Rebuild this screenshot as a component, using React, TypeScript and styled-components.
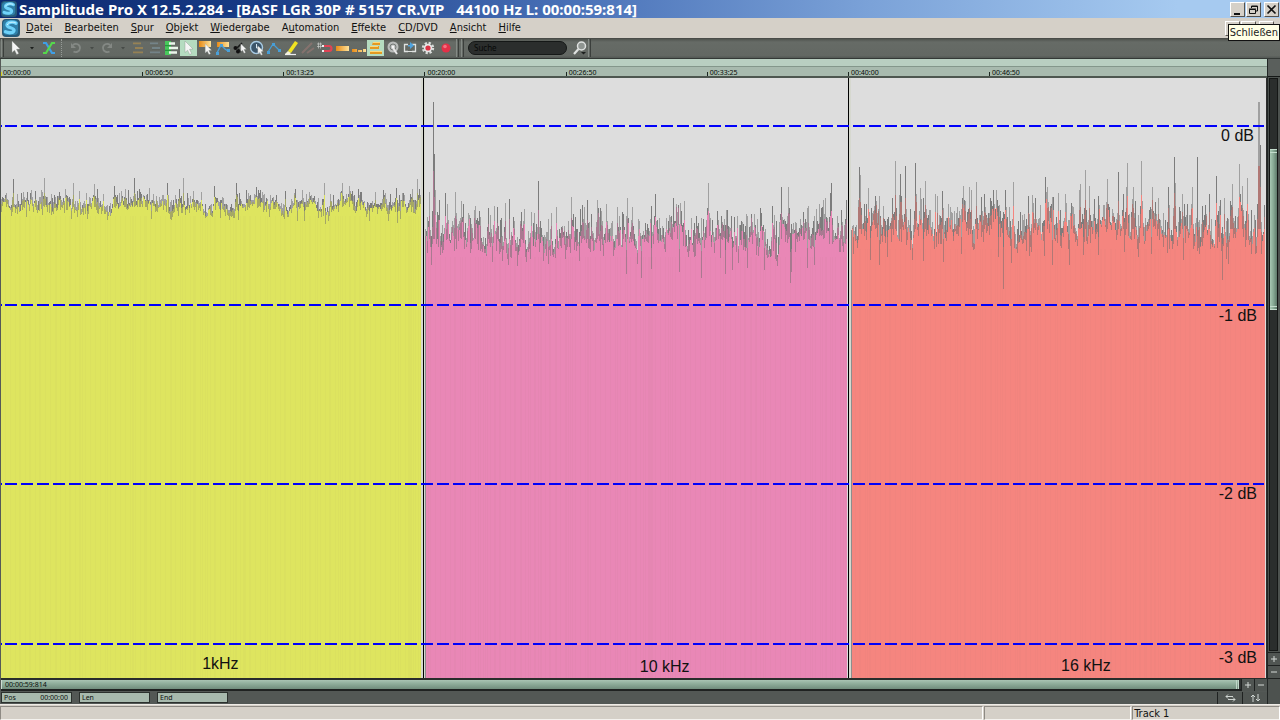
import React from "react";
import styled, { createGlobalStyle, css } from "styled-components";

const GlobalStyle = createGlobalStyle`
  *, *::before, *::after { box-sizing: border-box; }
  body { margin: 0; background: #d5d0c8; font-family: "Noto Sans", "Open Sans", sans-serif; }
  button, input { font: inherit; color: inherit; margin: 0; padding: 0; border: 0; border-radius: 0; background: none; }
`;

const uiFont = `"DejaVu Sans Condensed", "DejaVu Sans", sans-serif`;

/* ---------- window frame ---------- */

const Window = styled.div`
  position: relative;
  display: flex;
  flex-direction: column;
  width: 100%;
  min-height: 100vh;
  overflow: hidden;
`;

const TitleBar = styled.header`
  display: flex;
  align-items: center;
  height: 18px;
  padding: 0 1px 0 1px;
  background: linear-gradient(90deg, #0d2a70 0%, #173a85 20%, #4a72b8 45%, #7ba2d8 68%, #a6caf0 92%);
`;

const Title = styled.h1`
  flex: 1;
  margin: 0 0 0 2px;
  font-size: 15px;
  line-height: 18px;
  font-weight: 700;
  color: #fff;
  white-space: pre;
`;

const MenuBar = styled.nav`
  display: flex;
  align-items: center;
  height: 20px;
  padding: 0 6px 0 2px;
  background: #d5d0c8;
`;

const MenuList = styled.div`
  display: flex;
  flex: 1;
  gap: 12px;
  padding-left: 6px;
`;

const MenuItem = styled.button`
  font-family: ${uiFont};
  font-size: 11px;
  line-height: 18px;
  color: #111;
  white-space: nowrap;
`;

const WindowButtons = styled.div`
  display: flex;
  gap: 1px;
`;

const WindowButton = styled.button<{ $apart?: boolean }>`
  display: flex;
  width: 15px;
  height: 15px;
  margin-left: ${(p) => (p.$apart ? 2 : 0)}px;
  background: #d5d0c8;
  border: 1px solid;
  border-color: #fff #55524e #55524e #fff;
`;

const Tooltip = styled.div`
  position: absolute;
  top: 24px;
  right: 0;
  padding: 0 1px;
  border: 1px solid #111;
  background: #ffffe6;
  font-family: ${uiFont};
  font-size: 11px;
  line-height: 15px;
  color: #222;
`;

/* ---------- toolbar ---------- */

const ToolBar = styled.div`
  display: flex;
  align-items: center;
  height: 21px;
  padding: 0 0 2px 1px;
  background: linear-gradient(#50544f, #666b66 3px, #636863 17px, #565b57 18px);
  border-top: 1px solid #4a4c48;
  border-bottom: 1px solid #343936;
`;

const ToolButton = styled.button<{ $active?: boolean; $dim?: boolean; $w?: number }>`
  display: flex;
  align-items: center;
  justify-content: center;
  flex: none;
  width: ${(p) => p.$w ?? 17}px;
  height: 16px;
  opacity: ${(p) => (p.$dim ? 0.4 : 1)};
  ${(p) => p.$active && css`background: #b5dcc0;`}
`;

const Grip = styled.span<{ $dotted?: boolean; $apart?: boolean }>`
  flex: none;
  width: 3px;
  height: 18px;
  margin-right: 2px;
  margin-left: ${(p) => (p.$apart ? 4 : 0)}px;
  border-left: 1px ${(p) => (p.$dotted ? "dotted #969b97" : "solid #848a85")};
  border-right: 1px ${(p) => (p.$dotted ? "none" : "solid #3b3f3c")};
`;

const SearchBox = styled.input`
  flex: none;
  width: 99px;
  height: 14px;
  margin: 0 4px 0 2px;
  padding: 0 5px;
  border: 1px solid #151817;
  border-radius: 7px;
  background: #2b2e2d;
  font-size: 8px;
  color: #090b0a;
  &::placeholder { color: #070908; opacity: 1; }
`;

/* ---------- project area ---------- */

const Project = styled.main`
  display: flex;
  flex: 1;
`;

const Arrange = styled.section`
  display: flex;
  flex-direction: column;
  flex: 1;
  min-width: 0;
  border-left: 1px solid #555a57;
`;

const RulerTop = styled.div`
  height: 8px;
  background: #b9cfc1;
  border-bottom: 1px solid #84978b;
`;

const Ruler = styled.div`
  display: flex;
  height: 11px;
  background: #a8baae;
  border-bottom: 2px solid #4d564f;
  overflow: hidden;
`;

const RulerMark = styled.span`
  position: relative;
  flex: 0 0 11.15%;
  padding-left: 3px;
  font-size: 7px;
  line-height: 11px;
  color: #060a08;
  white-space: nowrap;
  &::before {
    content: "";
    position: absolute;
    left: 0;
    bottom: 0;
    width: 1px;
    height: 4px;
    background: #1d2721;
  }
  &:first-child { padding-left: 2px; }
  &:first-child::before { background: #d6d21c; }
`;

const Canvas = styled.div`
  position: relative;
  flex: 1;
  min-height: 300px;
  background: #ddd;
  border-right: 1px solid #2c2c2c;
`;

const Drawing = styled.svg`
  position: absolute;
  inset: 0;
  width: 100%;
  height: 100%;
`;

const LevelLabel = styled.span<{ $top: number; $right: number }>`
  position: absolute;
  top: ${(p) => p.$top}%;
  right: ${(p) => p.$right}px;
  font: 16px/20px "Liberation Sans", Arial, sans-serif;
  color: #111;
`;

const TrackLabel = styled.span<{ $left: number; $bottom: number }>`
  position: absolute;
  left: ${(p) => p.$left}%;
  bottom: ${(p) => p.$bottom}px;
  font: 16px/20px "Liberation Sans", Arial, sans-serif;
  color: #111;
`;

const HScroll = styled.div`
  display: flex;
  align-items: center;
  height: 13px;
  background: #303433;
  border-top: 2px solid #2a2d2b;
  border-bottom: 2px solid #1f2221;
`;

const HThumb = styled.div`
  flex: 1;
  height: 9px;
  margin-right: 2px;
  padding-left: 3px;
  border-left: 1px solid #ccdcd2;
  border-right: 3px double #c0d6c8;
  background: linear-gradient(#a9c4b3, #8fae9b 40%, #718d7d);
  font-size: 7px;
  line-height: 9px;
  color: #0a100d;
`;

const SmallButton = styled.button<{ $w?: number }>`
  display: flex;
  flex: none;
  align-items: center;
  justify-content: center;
  width: ${(p) => p.$w ?? 13}px;
  height: 12px;
  background: #505552;
  border-left: 1px solid #1f2221;
`;

const Transport = styled.div`
  display: flex;
  align-items: center;
  height: 13px;
  gap: 7px;
  background: #535855;
`;

const Field = styled.label`
  display: flex;
  align-items: center;
  width: 71px;
  height: 11px;
  padding: 0 3px 0 2px;
  border: 1px solid #2b302d;
  background: #a7b9ad;
  font-size: 7px;
  line-height: 9px;
  color: #0c120f;
`;

const FieldInput = styled.input`
  flex: 1;
  width: 0;
  height: 9px;
  text-align: right;
`;

const TransportEnd = styled.div`
  display: flex;
  margin-left: auto;
`;

const SideBar = styled.aside`
  display: flex;
  flex-direction: column;
  flex: none;
  width: 13px;
  background: #4d524f;
  border-left: 1px solid #222625;
`;

const SideTop = styled.div`
  height: 18px;
  border-bottom: 1px solid #151817;
  background: #5a5f5c;
`;

const SideTrack = styled.div`
  display: flex;
  flex: 1;
  flex-direction: column;
  margin: 1px 2px 1px 1px;
  border: 1px solid #151716;
  background: #2b2e2d;
`;

const Space = styled.div<{ $grow: number }>`
  flex: ${(p) => p.$grow} 0 0;
`;

const SideThumb = styled.div`
  flex: 155 0 0;
  border-top: 4px double #c3dccc;
  border-bottom: 4px double #c3dccc;
  background: linear-gradient(90deg, #a7c8b3, #86a893 50%, #5f7a6b);
`;

const SideButton = styled(SmallButton)`
  width: 12px;
  height: 13px;
  border-left: 0;
  border-top: 1px solid #1f2221;
`;

const SideBottom = styled.div`
  height: 26px;
  border-top: 1px solid #1f2221;
`;

const StatusBar = styled.footer`
  display: flex;
  height: 16px;
  gap: 1px;
  padding-top: 1px;
  background: #d5d0c8;
  border-top: 1px solid #eeebe6;
`;

const StatusCell = styled.div<{ $grow: number }>`
  flex: ${(p) => p.$grow} 0 0;
  padding-left: 1px;
  border: 1px solid;
  border-color: #8e8a84 #fff #f4f2ee #8e8a84;
  font-family: ${uiFont};
  font-size: 11px;
  line-height: 13px;
  color: #111;
`;

/* ---------- waveform data ---------- */

type Mark = [x: number, y: number];

interface Track {
  from: number;
  to: number;
  mean: number;
  spread: number;
  color: string;
  peaks: Mark[];
  dips: Mark[];
}

const tracks: Track[] = [
  {
    from: 1, to: 421, mean: 207, spread: 9, color: "#dee55f",
    peaks: [[6, 193], [13, 179], [23, 192], [35, 191], [44, 178], [59, 192], [65, 189], [73, 183], [79, 191], [86, 193], [94, 184], [103, 194], [114, 186], [125, 189], [134, 178], [139, 189], [146, 195], [167, 183], [179, 189], [183, 178], [193, 191], [201, 192], [214, 186], [236, 183], [248, 193], [256, 187], [258, 190], [276, 195], [285, 191], [295, 189], [308, 199], [324, 183], [330, 194], [342, 183], [349, 186], [358, 189], [375, 192], [383, 190], [396, 188], [402, 193], [412, 189], [417, 179], [419, 189]],
    dips: [[26, 217], [42, 215], [77, 217], [87, 219], [107, 220], [151, 219], [171, 220], [238, 220], [284, 219], [297, 221], [304, 221], [318, 218], [369, 221], [388, 221], [397, 223], [400, 219]],
  },
  {
    from: 425, to: 847, mean: 239, spread: 18, color: "#e987b6",
    peaks: [[429, 192], [433, 102], [434, 154], [435, 190], [439, 200], [445, 193], [447, 204], [455, 192], [461, 201], [468, 213], [475, 206], [479, 211], [488, 208], [497, 207], [505, 203], [509, 199], [513, 217], [521, 212], [524, 209], [531, 212], [538, 181], [551, 213], [556, 207], [568, 221], [571, 197], [573, 214], [582, 205], [587, 200], [591, 214], [597, 200], [601, 211], [606, 204], [617, 207], [623, 214], [627, 198], [632, 207], [645, 223], [651, 206], [655, 194], [666, 218], [677, 212], [684, 201], [691, 218], [696, 216], [708, 183], [721, 216], [726, 210], [731, 216], [737, 216], [742, 222], [754, 214], [761, 213], [772, 206], [774, 215], [781, 187], [788, 187], [796, 223], [804, 223], [808, 206], [825, 198], [830, 193], [831, 183], [837, 216], [841, 210], [846, 200]],
    dips: [[431, 265], [443, 250], [470, 253], [492, 262], [502, 261], [517, 266], [543, 261], [548, 264], [579, 261], [603, 256], [626, 274], [641, 278], [651, 269], [679, 272], [701, 278], [725, 274], [732, 270], [747, 268], [764, 270], [790, 283], [791, 272], [807, 268], [814, 265]],
  },
  {
    from: 852, to: 1265, mean: 229, spread: 20, color: "#f5857f",
    peaks: [[859, 167], [860, 175], [868, 188], [875, 196], [883, 206], [892, 198], [895, 161], [900, 174], [905, 166], [915, 163], [925, 181], [935, 194], [937, 196], [942, 191], [948, 204], [963, 186], [969, 187], [971, 190], [976, 182], [984, 194], [991, 201], [1005, 190], [1013, 182], [1028, 196], [1032, 195], [1045, 177], [1047, 187], [1052, 197], [1058, 193], [1065, 194], [1071, 203], [1079, 190], [1080, 184], [1085, 170], [1089, 186], [1098, 196], [1107, 179], [1118, 172], [1123, 194], [1126, 187], [1127, 163], [1133, 187], [1141, 161], [1155, 202], [1158, 198], [1168, 187], [1174, 157], [1175, 183], [1182, 194], [1192, 187], [1197, 157], [1209, 194], [1216, 176], [1220, 200], [1224, 198], [1232, 184], [1239, 164], [1242, 186], [1247, 178], [1258, 102], [1259, 102], [1260, 145], [1264, 205]],
    dips: [[853, 254], [870, 260], [879, 265], [887, 257], [923, 261], [943, 262], [961, 254], [998, 257], [1003, 289], [1011, 263], [1052, 265], [1069, 265], [1083, 255], [1098, 255], [1138, 257], [1151, 254], [1183, 260], [1197, 251], [1222, 280], [1228, 264], [1255, 254]],
  },
];

const FLOOR = 678;

function makeRandom(seed: number) {
  let s = seed;
  return () => {
    s = (s * 1664525 + 1013904223) >>> 0;
    return s / 4294967296;
  };
}

interface Shape {
  fill: string;
  light: string;
  dark: string;
  shade: string;
  stripes: string;
}

function shapeOf(track: Track, seed: number): Shape {
  const rnd = makeRandom(seed);
  const peaks = new Map(track.peaks);
  const dips = new Map(track.dips);
  const { mean, spread, from, to } = track;
  let fill = `M${from} ${FLOOR}`;
  let light = "";
  let dark = "";
  let shade = "";
  let stripes = "";
  let drift = 0;
  for (let x = from; x < to; x++) {
    drift = drift * 0.75 + (rnd() - 0.5) * spread * 0.85;
    const near = peaks.get(x - 1) ?? peaks.get(x + 1);
    const bottom = mean + spread * 0.15 + drift;
    let edge = bottom - rnd() * rnd() * spread * 0.8;
    let top = edge - rnd() * rnd() * spread * 1.6 - 2;
    let low = bottom + rnd() * rnd() * spread * 0.9;
    if (near !== undefined) {
      edge -= Math.min(spread * 0.6, (mean - near) * 0.25);
      top = Math.min(top, edge - (mean - near) * 0.12);
    }
    const peak = peaks.get(x);
    if (peak !== undefined) {
      top = peak;
      edge = mean - (mean - peak) * 0.5;
      low = Math.max(edge, mean);
    }
    const dip = dips.get(x);
    if (dip !== undefined) {
      low = dip;
      edge = mean + (dip - mean) * 0.3;
      top = Math.min(top, mean - 2);
    }
    const y = Math.round(edge);
    fill += `V${y}H${x + 1}`;
    const above = `M${x} ${Math.round(top)}h1V${y}h-1z`;
    if (rnd() < 0.45) dark += above;
    else light += above;
    if (low > y && (rnd() < 0.7 || dip !== undefined)) shade += `M${x} ${y}h1V${Math.round(low)}h-1z`;
    if (x % 5 === 0 || rnd() < 0.12) stripes += `M${x} ${Math.round(mean + spread)}h1V${FLOOR}h-1z`;
  }
  fill += `V${FLOOR}Z`;
  return { fill, light, dark, shade, stripes };
}

const shapes = tracks.map((t, i) => shapeOf(t, 71 + i * 37));
const levels = [126, 305, 484, 644];

function Waveforms() {
  return (
    <Drawing viewBox="1 78 1265 600" preserveAspectRatio="none" shapeRendering="crispEdges" role="img" aria-label="Pegelverlauf 1 kHz, 10 kHz, 16 kHz">
      {tracks.map((t, i) => (
        <g key={t.color}>
          <path d={shapes[i].fill} fill={t.color} />
          <path d={shapes[i].light} fill="#a0a0a0" />
          <path d={shapes[i].dark} fill="#7c7c7c" />
          <path d={shapes[i].shade} fill="#6c6c6c" fillOpacity={0.5} />
          <path d={shapes[i].stripes} fill="#a08060" fillOpacity={0.04} />
        </g>
      ))}
      <path d="M421 78h2v600h-2zM424 78h1v600h-1zM849 78h2v600h-2z" fill="#d6d8cf" />
      <path d="M423 78h1v600h-1zM848 78h1v600h-1z" fill="#000" />
      <path d="M425 236h1v442h-1zM851 230h1v448h-1z" fill="#8d8d8d" />
      {levels.map((y) => (
        <path key={y} d={`M5 ${y}H1264`} stroke="#0000fa" strokeWidth={2} strokeDasharray="12 4" />
      ))}
      {levels.map((y) => (
        <path key={y} d={`M1 ${y}h1`} stroke="#0000fa" strokeWidth={2} />
      ))}
    </Drawing>
  );
}

/* ---------- icons ---------- */

const Icon = ({ children }: { children: React.ReactNode }) => (
  <svg width="16" height="16" viewBox="0 0 16 16" fill="none" aria-hidden="true">{children}</svg>
);

const Pointer = ({ x = 0, y = 0, s = 1 }: { x?: number; y?: number; s?: number }) => (
  <path transform={`translate(${x} ${y}) scale(${s})`} d="M4 1l8 8-3.500.3 2.200 4.200-2 1-2.100-4.300L4 12.500z" fill="#f4f5f4" stroke="#8a8f8b" strokeWidth=".4" />
);

const AppLogo = ({ size }: { size: number }) => (
  <svg width={size} height={size} viewBox="0 0 18 18" aria-hidden="true">
    <rect x="0" y="0" width="18" height="18" rx="4" fill="#285a78" />
    <rect x="1" y="1" width="15" height="15" rx="4" fill="#2f7fa8" />
    <path d="M14 4.200C11 2.400 5.500 3 5 6c-.4 3 7.500 2.500 7 5.500-.4 2.500-5 2.800-8.500 1.300" fill="none" stroke="#6fd2fa" strokeWidth="3.400" strokeLinecap="round" />
    <path d="M13.500 3.800C11 2.600 6 3 5.400 5.600" fill="none" stroke="#d5f5ff" strokeWidth="1" strokeLinecap="round" />
  </svg>
);

const MinimizeGlyph = () => (
  <svg width="13" height="13" viewBox="0 0 13 13" aria-hidden="true"><path d="M3 10h6v2H3z" fill="#111" /></svg>
);
const RestoreGlyph = () => (
  <svg width="13" height="13" viewBox="0 0 13 13" aria-hidden="true">
    <path d="M4.500 5V3h6v5H9M4 3.500h7M2.500 6.500h6v4h-6zM2 6h7" fill="none" stroke="#111" />
  </svg>
);
const CloseGlyph = () => (
  <svg width="13" height="13" viewBox="0 0 13 13" aria-hidden="true"><path d="M2.500 2.500l8 8M10.500 2.500l-8 8" stroke="#111" strokeWidth="1.600" /></svg>
);

const Caret = () => (
  <svg width="6" height="6" viewBox="0 0 6 6" aria-hidden="true"><path d="M1 2h4L3 4.500z" fill="#1c1f1d" /></svg>
);

const Curl = ({ flip }: { flip?: boolean }) => (
  <Icon>
    <g transform={flip ? "translate(16 0) scale(-1 1)" : undefined}>
      <path d="M5 5c3-2.500 7-.5 7 3s-4 5-6.500 3.500" stroke="#b3b7b4" strokeWidth="1.800" />
      <path d="M3 3v5h5z" fill="#b3b7b4" />
    </g>
  </Icon>
);

const Bars = ({ a, b }: { a: string; b: string }) => (
  <Icon>
    <path d="M3 3.500h8M5 8h8M3 12.500h10" stroke={a} strokeWidth="2" />
    <path d="M3 5h8M5 9.500h8M3 14h10" stroke={b} strokeWidth="1" />
  </Icon>
);

const Gold = () => (
  <defs>
    <linearGradient id="gold" x1="0" x2="1" y1="0" y2="0">
      <stop offset="0" stopColor="#e78a16" />
      <stop offset="1" stopColor="#ffe39a" />
    </linearGradient>
  </defs>
);

const tools: { name: string; icon: React.ReactNode; active?: boolean; dim?: boolean }[] = [
  { name: "Gruppieren", icon: <Bars a="#e0a53e" b="#67706a" />, dim: true },
  { name: "Gruppe lösen", icon: <Bars a="#8cabbd" b="#565d58" />, dim: true },
  {
    name: "Spuren", icon: (
      <Icon>
        <path d="M1 1h6v14H1z" fill="#48c85c" />
        <path d="M5 3.500h6M5 8h9M5 12.500h8" stroke="#e9f5ea" strokeWidth="2.400" />
        <path d="M1 5.700h6M1 10.300h6" stroke="#1f8a35" />
      </Icon>
    ),
  },
  { name: "Universalmodus", icon: <Icon><Pointer /></Icon>, active: true },
  { name: "Bereichsmodus", icon: <Icon><path d="M1 1h12v6H1z" fill="url(#gold)" /><Pointer x={4} y={3} s={0.8} /></Icon> },
  { name: "Kurvenmodus", icon: <Icon><path d="M2 2h12v5H2z" fill="url(#gold)" /><path d="M2 13l4-8 4 4 3 2" stroke="#4aa0d8" strokeWidth="1.400" /><path d="M1 12h3v3H1zM5 4h3v3H5zM12 9h3v3h-3z" fill="#4aa0d8" /></Icon> },
  { name: "Schere", icon: <Icon><circle cx="3.500" cy="8" r="2" fill="#111" /><circle cx="6" cy="11.500" r="2" fill="#111" /><path d="M5 8l5-5M6 9l3 3" stroke="#181a19" strokeWidth="1.600" /><Pointer x={6} y={3} s={0.7} /></Icon> },
  { name: "Zeitmodus", icon: <Icon><circle cx="7.500" cy="7.500" r="6" fill="#3c566b" stroke="#a8cbe3" strokeWidth="1.400" /><path d="M7.500 4v4h3" stroke="#d8e9f4" /><Pointer x={6} y={5} s={0.7} /></Icon> },
  { name: "Automation zeichnen", icon: <Icon><path d="M2 12l5-8 5 5 2 2" stroke="#479ed6" strokeWidth="1.200" /><path d="M1 11h3v3H1zM6 3h3v3H6zM12 9h3v3h-3z" fill="#479ed6" /></Icon> },
  { name: "Stift", icon: <Icon><path d="M5 11L12 1l3 2-7 10z" fill="#f1e321" /><path d="M5 11l-3 3h5l1-1z" fill="#f5f2d2" /><path d="M2 14.500h11" stroke="#eee" strokeWidth="1.200" /></Icon> },
  { name: "Radierer", icon: <Icon><path d="M2 13L12 3M7 13l7-5" stroke="#b5807c" strokeWidth="2" /></Icon>, dim: true },
  { name: "Raster", icon: <Icon><path d="M0 4h5M0 6.500h5M1.500 2.500v6M3.500 2.500v6" stroke="#c8ccc9" strokeWidth=".7" /><path d="M7 6h5a2.200 2.200 0 010 5H7" stroke="#e04355" strokeWidth="2.200" /><path d="M5 6h2M5 11h2" stroke="#eee" strokeWidth="2.200" /></Icon> },
  { name: "Objekt lang", icon: <Icon><path d="M2 6h13v5H2z" fill="url(#gold)" /></Icon> },
  { name: "Objekt geteilt", icon: <Icon><path d="M1 9h5v3H1zM7 10h4v2H7zM12 9h3v3h-3z" fill="url(#gold)" /></Icon> },
  { name: "Objekte versetzt", icon: <Icon><path d="M5 2h7v3H4zM2 6h9v3H2zM2 11h12v3H2z" fill="#e39a22" /><path d="M5 2.500h7M2 6.500h8M2 11.500h12" stroke="#ffd978" /></Icon>, active: true },
  { name: "CD brennen", icon: <Icon><circle cx="8" cy="7" r="5.500" fill="#b9bcba" /><circle cx="8" cy="7" r="3" stroke="#747976" /><circle cx="8" cy="7" r="1.400" fill="#f5f5f5" /><path d="M8 8l4 6" stroke="#e8e8e8" strokeWidth="2" /></Icon> },
  { name: "Schleife", icon: <Icon><path d="M6 4.500H2.500v7H6M10 4.500h3.500v7H10" stroke="#dfe2e0" strokeWidth="1.300" /><path d="M5 11.500h6" stroke="#dfe2e0" /><path d="M6 5h2V2l4 3.500L8 9V6.500H6z" fill="#4fa3df" /></Icon> },
  { name: "Einstellungen", icon: <Icon><circle cx="9" cy="8" r="5" stroke="#dadddb" strokeWidth="2.400" strokeDasharray="2.200 1.730" /><circle cx="9" cy="8" r="4.200" fill="#e6e8e7" /><circle cx="9" cy="8" r="2.600" fill="#dc3345" /></Icon> },
  { name: "Aufnahme", icon: <Icon><circle cx="10" cy="8" r="4.500" fill="#e23048" /><circle cx="9" cy="6.500" r="1.800" fill="#f2707f" /></Icon> },
];

const PlusMinus = ({ plus }: { plus?: boolean }) => (
  <svg width="8" height="8" viewBox="0 0 8 8" aria-hidden="true"><path d={plus ? "M1 4h6M4 1v6" : "M1 4h6"} stroke="#d3d9d5" strokeWidth="1" /></svg>
);

/* ---------- content ---------- */

const menus = [
  ["D", "atei"], ["B", "earbeiten"], ["S", "pur"], ["O", "bjekt"], ["W", "iedergabe"],
  ["A", "utomation", "u"], ["E", "ffekte"], ["C", "D/DVD"], ["A", "nsicht"], ["H", "ilfe"],
];

const marks = ["00:00:00", "00:06:50", "00:13:25", "00:20:00", "00:26:50", "00:33:25", "00:40:00", "00:46:50"];

function Controls() {
  return (
    <WindowButtons>
      <WindowButton aria-label="Minimieren"><MinimizeGlyph /></WindowButton>
      <WindowButton aria-label="Wiederherstellen"><RestoreGlyph /></WindowButton>
      <WindowButton aria-label="Schließen" $apart><CloseGlyph /></WindowButton>
    </WindowButtons>
  );
}

export default function App() {
  return (
    <Window>
      <GlobalStyle />
      <TitleBar>
        <AppLogo size={16} />
        <Title>{"Samplitude Pro X 12.5.2.284 - [BASF LGR 30P # 5157 CR.VIP   44100 Hz L: 00:00:59:814]"}</Title>
        <Controls />
      </TitleBar>
      <MenuBar>
        <AppLogo size={18} />
        <MenuList>
          {menus.map(([key, rest, second]) => (
            <MenuItem key={key + rest}>
              {second ? <>{key}<u>{second}</u>{rest.slice(1)}</> : <><u>{key}</u>{rest}</>}
            </MenuItem>
          ))}
        </MenuList>
        <Controls />
      </MenuBar>
      <Tooltip role="tooltip">Schließen</Tooltip>

      <ToolBar>
        <Grip />
        <ToolButton aria-label="Mausmodus"><Icon><Pointer x={1} /></Icon></ToolButton>
        <ToolButton aria-label="Mausmodus wählen"><Caret /></ToolButton>
        <ToolButton aria-label="Crossfade">
          <Icon>
            <path d="M2 3h3l6 10h3" stroke="#3f9fe6" strokeWidth="2.200" />
            <path d="M2 13h3l6-10h3" stroke="#55d84c" strokeWidth="2.200" />
          </Icon>
        </ToolButton>
        <ToolButton as="span" $w={4} />
        <Grip $dotted />
        <ToolButton aria-label="Rückgängig" $dim $w={20}><Curl /></ToolButton>
        <ToolButton aria-label="Rückgängig-Liste" $dim $w={11}><Caret /></ToolButton>
        <ToolButton aria-label="Wiederherstellen" $dim $w={20}><Curl flip /></ToolButton>
        <ToolButton aria-label="Wiederherstellen-Liste" $dim $w={12}><Caret /></ToolButton>
        <svg width="0" height="0" aria-hidden="true"><Gold /></svg>
        {tools.map((t) => (
          <ToolButton key={t.name} aria-label={t.name} $active={t.active} $dim={t.dim}>{t.icon}</ToolButton>
        ))}
        <Grip $apart />
        <Grip />
        <SearchBox placeholder="Suche" aria-label="Suche" />
        <ToolButton aria-label="Suchen">
          <Icon>
            <circle cx="9.500" cy="6" r="4" fill="#8f9591" stroke="#dfe2e0" strokeWidth="1.500" />
            <path d="M6.500 9L2 14" stroke="#dfe2e0" strokeWidth="2.200" />
            <path d="M9 12h5l-2.500 2.500z" fill="#1c1f1d" />
          </Icon>
        </ToolButton>
        <Grip />
      </ToolBar>

      <Project>
        <Arrange>
          <RulerTop />
          <Ruler>{marks.map((m) => <RulerMark key={m}>{m}</RulerMark>)}</Ruler>
          <Canvas>
            <Waveforms />
            <LevelLabel $top={8} $right={12}>0 dB</LevelLabel>
            <LevelLabel $top={38} $right={9}>-1 dB</LevelLabel>
            <LevelLabel $top={67.700} $right={9}>-2 dB</LevelLabel>
            <LevelLabel $top={95} $right={9}>-3 dB</LevelLabel>
            <TrackLabel $left={15.900} $bottom={4}>1kHz</TrackLabel>
            <TrackLabel $left={50.500} $bottom={1}>10 kHz</TrackLabel>
            <TrackLabel $left={83.800} $bottom={2}>16 kHz</TrackLabel>
          </Canvas>
          <HScroll>
            <HThumb>00:00:59:814</HThumb>
            <SmallButton aria-label="Horizontal vergrößern"><PlusMinus plus /></SmallButton>
            <SmallButton aria-label="Horizontal verkleinern"><PlusMinus /></SmallButton>
          </HScroll>
          <Transport>
            <Field>Pos<FieldInput defaultValue="00:00:00" /></Field>
            <Field>Len<FieldInput defaultValue="" /></Field>
            <Field>End<FieldInput defaultValue="" /></Field>
            <TransportEnd>
              <SmallButton $w={25} aria-label="Horizontal anpassen">
                <svg width="13" height="10" viewBox="0 0 13 10" aria-hidden="true"><path d="M9 3.500H2M4 1.500l-2 2 2 2M4 6.500h7M9 4.500l2 2-2 2" stroke="#d0d6d2" fill="none" /></svg>
              </SmallButton>
              <SmallButton $w={25} aria-label="Vertikal anpassen">
                <svg width="13" height="10" viewBox="0 0 13 10" aria-hidden="true"><path d="M4 9V2M2 4l2-2 2 2M9 1v7M7 6l2 2 2-2" stroke="#d0d6d2" fill="none" /></svg>
              </SmallButton>
            </TransportEnd>
          </Transport>
        </Arrange>
        <SideBar>
          <SideTop />
          <SideTrack>
            <Space $grow={71} />
            <SideThumb />
            <Space $grow={344} />
          </SideTrack>
          <SideButton aria-label="Vertikal vergrößern"><PlusMinus plus /></SideButton>
          <SideButton aria-label="Vertikal verkleinern"><PlusMinus /></SideButton>
          <SideBottom />
        </SideBar>
      </Project>

      <StatusBar>
        <StatusCell $grow={988} />
        <StatusCell $grow={145} />
        <StatusCell $grow={146}>Track 1</StatusCell>
      </StatusBar>
    </Window>
  );
}
